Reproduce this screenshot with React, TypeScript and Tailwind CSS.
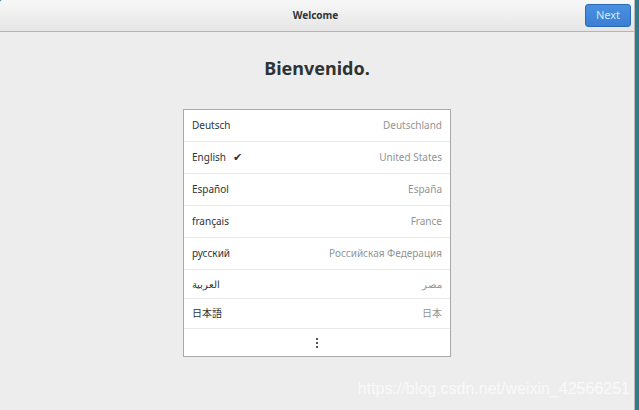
const rows = [
  { lang: "Deutsch", region: "Deutschland", h: "h-8" },
  { lang: "English", region: "United States", h: "h-8", checked: true },
  { lang: "Español", region: "España", h: "h-8" },
  { lang: "français", region: "France", h: "h-8" },
  { lang: "русский", region: "Российская Федерация", h: "h-8" },
  { lang: "العربية", region: "مصر", h: "h-[29px]" },
  { lang: "日本語", region: "日本", h: "h-[30px]" },
];

export default function App() {
  return (
    <div className="flex h-[410px] w-[639px] bg-[#2f7d8c] font-['Noto_Sans','Noto_Sans_CJK_JP',sans-serif]">
      <div className="relative flex w-[635px] flex-col overflow-hidden rounded-tl-[3px] border-r border-[#b8b8b8] bg-[#ededed]">
        <div className="flex h-8 shrink-0 items-center border-b border-[#b4b4b4] bg-gradient-to-b from-[#f7f7f7] to-[#e6e6e6]">
          <div className="flex-1 pl-[46px] text-center text-[10px] font-bold text-[#2e3436]">Welcome</div>
          <button className="mr-[3px] h-[23px] w-[46px] rounded-[3px] border border-[#2a6bb8] bg-gradient-to-b from-[#4a90e0] to-[#3a7fd4] text-[11px] text-[#dbe7f6]">
            Next
          </button>
        </div>

        <div className="flex flex-1 flex-col items-center">
          <h1 className="mt-[25px] text-[18px] font-bold leading-[22px] text-[#2e3436]">Bienvenido.</h1>

          <div className="mt-[30px] w-[268px] border border-[#a9a9a9] bg-white">
            {rows.map((r) => (
              <div
                key={r.lang}
                className={`flex ${r.h} items-center justify-between border-b border-[#e9e9e9] px-[8px] text-[10px]`}
              >
                <div className="flex items-center gap-[7px] text-[#2e3436]">
                  <span>{r.lang}</span>
                  {r.checked && (
                    <span className="font-['DejaVu_Sans',sans-serif] text-[11px] leading-none text-[#2e3436]">✔</span>
                  )}
                </div>
                <span className="text-[#929595]">{r.region}</span>
              </div>
            ))}
            <div className="flex h-[27px] items-center justify-center">
              <div className="flex flex-col gap-[2px]">
                <span className="h-[2px] w-[2px] bg-[#555]" />
                <span className="h-[2px] w-[2px] bg-[#555]" />
                <span className="h-[2px] w-[2px] bg-[#555]" />
              </div>
            </div>
          </div>
        </div>

        <div className="absolute bottom-[9px] right-[4px] font-['Liberation_Sans',sans-serif] text-[16px] text-white/70">
          https://blog.csdn.net/weixin_42566251
        </div>
      </div>
    </div>
  );
}
